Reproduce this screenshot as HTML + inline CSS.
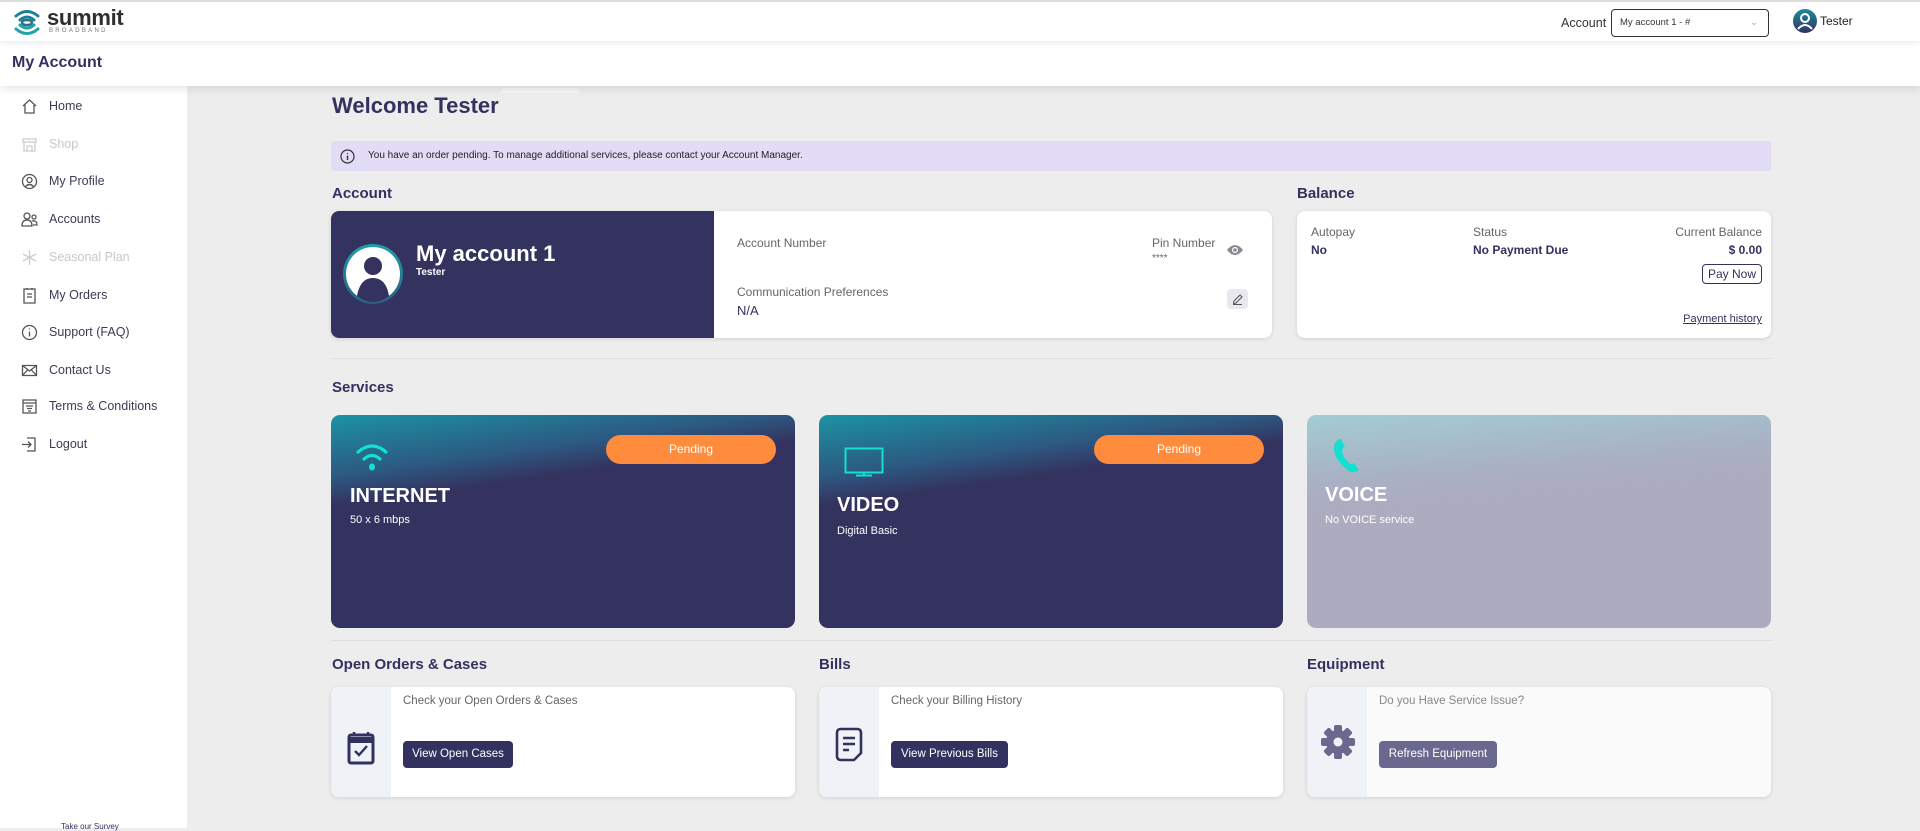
<!DOCTYPE html>
<html><head><meta charset="utf-8"><style>
*{box-sizing:border-box;margin:0;padding:0}
body{width:1920px;height:828px;overflow:hidden;background:#ededed;font-family:"Liberation Sans",sans-serif;color:#33315f;position:relative}
.a{position:absolute}
.hdr{left:0;top:0;width:1920px;height:41px;background:#fff;border-top:2px solid #ddd;box-shadow:0 2px 6px rgba(0,0,0,.08);z-index:3}
.bar{left:0;top:41px;width:1920px;height:45px;background:#fff;box-shadow:0 3px 8px rgba(0,0,0,.1);z-index:2}
.side{left:0;top:86px;width:187px;height:742px;background:#fff}
.mi{position:absolute;left:21px;font-size:12.5px;color:#3d3b55;display:flex;align-items:center;height:20px}
.mi svg{width:17px;height:17px;margin-right:11px;fill:none;stroke:#555;stroke-width:1.3}
.mi.dis{color:#c8c8c8}.mi.dis svg{stroke:#ccc}
.h2{font-size:15px;font-weight:bold;color:#33315f}
.card{background:#fff;border-radius:8px;box-shadow:0 1px 4px rgba(0,0,0,.12);overflow:hidden}
.lbl{font-size:12px;color:#666}
.svc{border-radius:9px;overflow:hidden;color:#fff}
.pill{background:#ff8c3c;border-radius:16px;color:#fff;font-size:12px;text-align:center;line-height:29px;width:170px;height:29px}
.btn{background:#33315f;color:#fff;font-size:11.5px;border-radius:4px;text-align:center;line-height:27px;height:27px}
</style></head><body>
<div class="a hdr">
 <svg class="a" style="left:13px;top:7px" width="28" height="27" viewBox="0 0 28 27"><g fill="none" stroke-linecap="round"><path d="M3 7 Q14 -2 25 7" stroke="#1e7f9a" stroke-width="3"/><path d="M3 20 Q14 29 25 20" stroke="#1fa5a8" stroke-width="3"/><path d="M7 11 Q14 5 21 11" stroke="#1e7f9a" stroke-width="3"/><path d="M7 16 Q14 22 21 16" stroke="#1fa5a8" stroke-width="3"/><ellipse cx="14" cy="13.5" rx="5" ry="2.5" stroke="#2b6f8a" stroke-width="2.4"/></g></svg>
 <div class="a" style="left:47px;top:3px;font-size:22px;font-weight:bold;color:#2f2f2f;letter-spacing:-.3px">summit</div>
 <div class="a" style="left:49px;top:26px;font-size:6px;color:#777;letter-spacing:2.3px">BROADBAND</div>
 <div class="a" style="left:1561px;top:14px;font-size:12.5px;color:#333">Account</div>
 <div class="a" style="left:1611px;top:7px;width:158px;height:28px;border:1.5px solid #333;border-radius:4px;font-size:9.5px;line-height:25px;padding-left:8px;color:#333">My account 1 - #<span style="position:absolute;right:10px;color:#aaa">&#8964;</span></div>
 <svg class="a" style="left:1793px;top:7px" width="24" height="24" viewBox="0 0 24 24"><defs><linearGradient id="ug" x1="0" y1="0" x2="0" y2="1"><stop offset="0" stop-color="#1e8a9e"/><stop offset="1" stop-color="#33315f"/></linearGradient></defs><circle cx="12" cy="12" r="12" fill="url(#ug)"/><circle cx="12" cy="9" r="4" fill="none" stroke="#fff" stroke-width="2"/><path d="M5 20 Q12 12 19 20" fill="none" stroke="#fff" stroke-width="2"/></svg>
 <div class="a" style="left:1820px;top:12px;font-size:12px;color:#222">Tester</div>
</div>
<div class="a bar"><div class="a" style="left:12px;top:13px;font-size:16px;font-weight:bold;color:#33315f">My Account</div></div>
<div class="a side">
 <div class="mi" style="top:10px"><svg viewBox="0 0 17 17"><path d="M2 8 L8.5 2 L15 8 M4 7 V15 H13 V7"/></svg>Home</div>
 <div class="mi dis" style="top:48px"><svg viewBox="0 0 17 17"><path d="M2 3 H15 V6 H2 Z M3 6 V15 H14 V6 M6 15 V10 H11 V15"/></svg>Shop</div>
 <div class="mi" style="top:85px"><svg viewBox="0 0 17 17"><circle cx="8.5" cy="8.5" r="7"/><circle cx="8.5" cy="7" r="2.5"/><path d="M4.5 13.5 Q8.5 9.5 12.5 13.5"/></svg>My Profile</div>
 <div class="mi" style="top:123px"><svg viewBox="0 0 17 17"><circle cx="6" cy="5" r="3"/><circle cx="13" cy="6" r="2"/><path d="M1 15 Q1 9 6 9 Q11 9 11 15 Z M11 10 Q16 9 16 14 H12"/></svg>Accounts</div>
 <div class="mi dis" style="top:161px"><svg viewBox="0 0 17 17"><path d="M8.5 1 V16 M2 5 L15 12 M2 12 L15 5"/></svg>Seasonal Plan</div>
 <div class="mi" style="top:199px"><svg viewBox="0 0 17 17"><path d="M3 2 H14 V16 H3 Z M6 7 H11 M6 10 H11 M6 1 V3 M11 1 V3"/></svg>My Orders</div>
 <div class="mi" style="top:236px"><svg viewBox="0 0 17 17"><circle cx="8.5" cy="8.5" r="7"/><path d="M8.5 7.5 V12.5 M8.5 4.5 V5.5"/></svg>Support (FAQ)</div>
 <div class="mi" style="top:274px"><svg viewBox="0 0 17 17"><path d="M1.5 3.5 H15.5 V13.5 H1.5 Z M1.5 3.5 L8.5 9 L15.5 3.5 M1.5 13.5 L6.5 8 M15.5 13.5 L10.5 8"/></svg>Contact Us</div>
 <div class="mi" style="top:310px"><svg viewBox="0 0 17 17"><path d="M2 2 H15 V15 H2 Z M2 5 H15 M5 8 H12 M6 10.5 H11 M7 13 H10"/></svg>Terms &amp; Conditions</div>
 <div class="mi" style="top:348px"><svg viewBox="0 0 17 17"><path d="M6 2 H14 V15 H6 M1 8.5 H10 M7 5.5 L10 8.5 L7 11.5"/></svg>Logout</div>
 <div class="a" style="left:61px;top:736px;font-size:8px;color:#33315f">Take our Survey</div>
</div>

<div class="a" style="left:502px;top:88px;width:77px;height:5px;background:#f6f6f6"></div>
<div class="a" style="left:332px;top:93px;font-size:22px;font-weight:bold;color:#33315f">Welcome Tester</div>
<div class="a" style="left:331px;top:141px;width:1440px;height:30px;background:#e2dcf6;border-radius:3px">
 <svg class="a" style="left:9px;top:8px" width="15" height="15" viewBox="0 0 15 15"><circle cx="7.5" cy="7.5" r="6.5" fill="none" stroke="#333" stroke-width="1.2"/><path d="M7.5 6.5 V11 M7.5 4 V5" stroke="#333" stroke-width="1.4"/></svg>
 <div class="a" style="left:37px;top:9px;font-size:10px;color:#222">You have an order pending. To manage additional services, please contact your Account Manager.</div>
</div>

<div class="a h2" style="left:332px;top:185px">Account</div>
<div class="a h2" style="left:1297px;top:185px">Balance</div>
<div class="a card" style="left:331px;top:211px;width:941px;height:127px">
 <div class="a" style="left:0;top:0;width:383px;height:127px;background:#34325f"></div>
 <svg class="a" style="left:12px;top:33px" width="60" height="60" viewBox="0 0 60 60"><defs><linearGradient id="ag" x1="0" y1="0" x2="0" y2="1"><stop offset="0" stop-color="#1ea0a8"/><stop offset="1" stop-color="#2a5f80"/></linearGradient></defs><circle cx="30" cy="30" r="30" fill="url(#ag)"/><circle cx="30" cy="30" r="27" fill="#fff"/><circle cx="30" cy="22" r="9" fill="#34325f"/><path d="M14 52 Q17 34 30 34 Q43 34 46 52 Q38 58 30 58 Q22 58 14 52Z" fill="#34325f"/></svg>
 <div class="a" style="left:85px;top:30px;font-size:22px;font-weight:bold;color:#fff">My account 1</div>
 <div class="a" style="left:85px;top:56px;font-size:10px;font-weight:bold;color:#fff">Tester</div>
 <div class="a lbl" style="left:406px;top:25px">Account Number</div>
 <div class="a lbl" style="left:406px;top:74px">Communication Preferences</div>
 <div class="a" style="left:406px;top:92px;font-size:13px;color:#33315f">N/A</div>
 <div class="a lbl" style="left:821px;top:25px">Pin Number</div>
 <div class="a" style="left:821px;top:42px;font-size:10px;color:#666">****</div>
 <svg class="a" style="left:895px;top:32px" width="18" height="14" viewBox="0 0 18 14"><path d="M1 7 Q9 -3 17 7 Q9 17 1 7Z" fill="#8a8a95"/><circle cx="9" cy="7" r="3" fill="#fff"/><circle cx="9" cy="7" r="1.8" fill="#8a8a95"/></svg>
 <div class="a" style="left:896px;top:78px;width:21px;height:20px;background:#e8e8ee;border-radius:4px"><svg class="a" style="left:5px;top:5px" width="11" height="11" viewBox="0 0 11 11"><path d="M8 1 L10 3 L4 9 L1.5 9.5 L2 7 Z M1 10.5 H10" fill="none" stroke="#555" stroke-width="1"/></svg></div>
</div>
<div class="a card" style="left:1297px;top:211px;width:474px;height:127px">
 <div class="a lbl" style="left:14px;top:14px">Autopay</div>
 <div class="a" style="left:14px;top:32px;font-size:12px;font-weight:bold">No</div>
 <div class="a lbl" style="left:176px;top:14px">Status</div>
 <div class="a" style="left:176px;top:32px;font-size:12px;font-weight:bold">No Payment Due</div>
 <div class="a lbl" style="right:9px;top:14px">Current Balance</div>
 <div class="a" style="right:9px;top:32px;font-size:12px;font-weight:bold">$ 0.00</div>
 <div class="a" style="right:9px;top:53px;width:60px;height:20px;border:1px solid #33315f;border-radius:4px;font-size:12px;text-align:center;line-height:18px">Pay Now</div>
 <div class="a" style="right:9px;top:102px;font-size:11px;text-decoration:underline">Payment history</div>
</div>
<div class="a" style="left:331px;top:358px;width:1440px;height:1px;background:#ddd"></div>

<div class="a h2" style="left:332px;top:379px">Services</div>
<div class="a svc" style="left:331px;top:415px;width:464px;height:213px;background:linear-gradient(172deg,#1b93a2 0%,#2c5a82 22%,#34325f 33%,#34325f 100%)">
 <svg class="a" style="left:24px;top:27px" width="34" height="32" viewBox="0 0 34 32"><g fill="none" stroke="#14e0d2" stroke-width="3.2" stroke-linecap="round"><path d="M3 10 Q17 -2 31 10"/><path d="M9 17 Q17 10 25 17"/></g><ellipse cx="17" cy="25" rx="3" ry="3.5" fill="#14e0d2"/></svg>
 <div class="a pill" style="left:275px;top:20px">Pending</div>
 <div class="a" style="left:19px;top:70px;font-size:20px;font-weight:bold">INTERNET</div>
 <div class="a" style="left:19px;top:99px;font-size:11px">50 x 6 mbps</div>
</div>
<div class="a svc" style="left:819px;top:415px;width:464px;height:213px;background:linear-gradient(172deg,#1b93a2 0%,#2c5a82 22%,#34325f 33%,#34325f 100%)">
 <div class="a pill" style="left:275px;top:20px">Pending</div>
 <svg class="a" style="left:25px;top:32px" width="40" height="30" viewBox="0 0 40 30"><rect x="1.5" y="1.5" width="37" height="24" fill="none" stroke="#14e0d2" stroke-width="2"/><path d="M20 25 V28 M12 28.5 H28" stroke="#14e0d2" stroke-width="2"/></svg>
 <div class="a" style="left:18px;top:79px;font-size:20px;font-weight:bold">VIDEO</div>
 <div class="a" style="left:18px;top:110px;font-size:11px">Digital Basic</div>
</div>
<div class="a svc" style="left:1307px;top:415px;width:464px;height:213px;background:linear-gradient(175deg,#a3ccd2 0%,#a9b0c4 28%,#adabbf 40%,#adabbf 100%)">
 <svg class="a" style="left:25px;top:22px" width="30" height="38" viewBox="0 0 30 38"><path d="M8 2 Q2 4 2 12 Q3 24 17 34 Q22 37 27 33 L22 26 Q19 28 17 26 Q10 19 10 13 Q10 11 13 10 L9 2Z" fill="#14e0d2"/></svg>
 <div class="a" style="left:18px;top:69px;font-size:20px;font-weight:bold">VOICE</div>
 <div class="a" style="left:18px;top:99px;font-size:11px">No VOICE service</div>
</div>
<div class="a" style="left:331px;top:640px;width:1440px;height:1px;background:#ddd"></div>

<div class="a h2" style="left:332px;top:656px">Open Orders &amp; Cases</div>
<div class="a h2" style="left:819px;top:656px">Bills</div>
<div class="a h2" style="left:1307px;top:656px">Equipment</div>

<div class="a card" style="left:331px;top:687px;width:464px;height:110px">
 <div class="a" style="left:0;top:0;width:60px;height:110px;background:#eff2f7"></div>
 <svg class="a" style="left:15px;top:43px" width="30" height="36" viewBox="0 0 30 36"><rect x="3" y="5" width="24" height="28" rx="2" fill="none" stroke="#33315f" stroke-width="3"/><path d="M3 10 H27" stroke="#33315f" stroke-width="6"/><path d="M8 2 V6 M22 2 V6" stroke="#33315f" stroke-width="2.5"/><path d="M9 21 L13 25 L21 16" fill="none" stroke="#33315f" stroke-width="2.4"/></svg>
 <div class="a" style="left:72px;top:8px;font-size:11.5px;color:#666">Check your Open Orders &amp; Cases</div>
 <div class="a btn" style="left:72px;top:54px;width:110px">View Open Cases</div>
</div>
<div class="a card" style="left:819px;top:687px;width:464px;height:110px">
 <div class="a" style="left:0;top:0;width:60px;height:110px;background:#eff2f7"></div>
 <svg class="a" style="left:13px;top:40px" width="34" height="36" viewBox="0 0 34 36"><path d="M9 2 H25 Q29 2 29 6 V26 L22 33 H9 Q5 33 5 29 V6 Q5 2 9 2Z" fill="none" stroke="#33315f" stroke-width="2.6"/><path d="M11 11 H23 M11 17 H23 M11 23 H17" stroke="#33315f" stroke-width="2.4"/></svg>
 <div class="a" style="left:72px;top:8px;font-size:11.5px;color:#666">Check your Billing History</div>
 <div class="a btn" style="left:72px;top:54px;width:117px">View Previous Bills</div>
</div>
<div class="a card" style="left:1307px;top:687px;width:464px;height:110px;background:#fafafa">
 <div class="a" style="left:0;top:0;width:60px;height:110px;background:#eff2f7"></div>
 <svg class="a" style="left:12px;top:36px" width="38" height="38" viewBox="0 0 38 38"><g fill="#6b6890"><circle cx="19" cy="19" r="12"/><rect x="15" y="2" width="8" height="34" rx="2"/><rect x="15" y="2" width="8" height="34" rx="2" transform="rotate(45 19 19)"/><rect x="15" y="2" width="8" height="34" rx="2" transform="rotate(90 19 19)"/><rect x="15" y="2" width="8" height="34" rx="2" transform="rotate(135 19 19)"/></g><circle cx="19" cy="19" r="4.5" fill="#eff2f7"/></svg>
 <div class="a" style="left:72px;top:8px;font-size:11.5px;color:#888">Do you Have Service Issue?</div>
 <div class="a btn" style="left:72px;top:54px;width:118px;background:#6b6890">Refresh Equipment</div>
</div>
</body></html>
